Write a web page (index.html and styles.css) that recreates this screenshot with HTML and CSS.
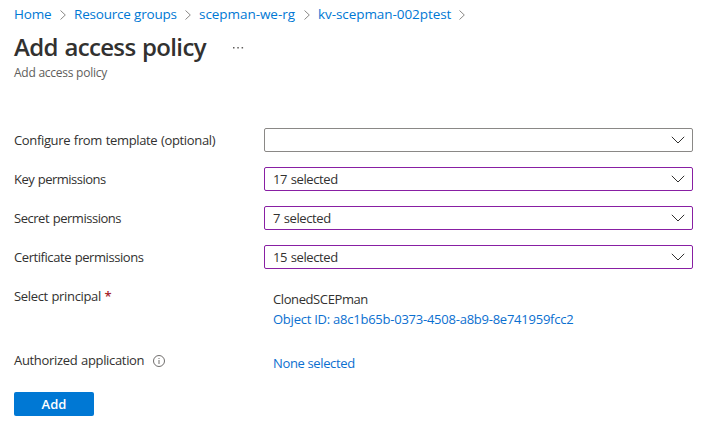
FILE: index.html
```html
<!DOCTYPE html>
<html lang="en">
<head>
<meta charset="utf-8">
<title>Add access policy</title>
<link rel="stylesheet" href="styles.css">
</head>
<body>
<nav class="crumbs">
<a class="c1">Home</a><svg class="sep" viewBox="0 0 6 10"><path d="M.5 .5L5.300 5 .5 9.500"/></svg>
<a class="c2">Resource groups</a><svg class="sep" viewBox="0 0 6 10"><path d="M.5 .5L5.300 5 .5 9.500"/></svg>
<a class="c3">scepman-we-rg</a><svg class="sep" viewBox="0 0 6 10"><path d="M.5 .5L5.300 5 .5 9.500"/></svg>
<a class="c4">kv-scepman-002ptest</a><svg class="sep" viewBox="0 0 6 10"><path d="M.5 .5L5.300 5 .5 9.500"/></svg>
</nav>
<header class="head">
<h1>Add access policy</h1>
<svg class="more" viewBox="0 0 12 4"><path d="M1 1h1.500v1.500H1zM5.300 1h1.500v1.500H5.300zM9.600 1h1.500v1.500H9.600z"/></svg>
</header>
<p class="sub">Add access policy</p>
<main class="form">
<div class="row"><label class="l1">Configure from template (optional)</label><div class="select plain"><span></span><svg viewBox="0 0 14 8"><path d="M.8.8L7 7l6.200-6.200"/></svg></div></div>
<div class="row"><label class="l2">Key permissions</label><div class="select"><span>17 selected</span><svg viewBox="0 0 14 8"><path d="M.8.8L7 7l6.200-6.200"/></svg></div></div>
<div class="row"><label class="l3">Secret permissions</label><div class="select"><span>7 selected</span><svg viewBox="0 0 14 8"><path d="M.8.8L7 7l6.200-6.200"/></svg></div></div>
<div class="row"><label class="l4">Certificate permissions</label><div class="select"><span>15 selected</span><svg viewBox="0 0 14 8"><path d="M.8.8L7 7l6.200-6.200"/></svg></div></div>
<div class="row principal"><label class="l5">Select principal <span class="req">*</span></label><div class="value"><span class="name">ClonedSCEPman</span><a class="object">Object ID: a8c1b65b-0373-4508-a8b9-8e741959fcc2</a></div></div>
<div class="row app"><label class="l6">Authorized application<svg class="info" viewBox="0 0 12 12"><circle cx="6" cy="6" r="5.500"/><path d="M6 5v4M6 3v1"/></svg></label><div class="value"><a class="none">None selected</a></div></div>
</main>
<button class="add">Add</button>
</body>
</html>
```

FILE: styles.css
```css
* { box-sizing: border-box; }
body { margin: 0; padding: 4px 0 0 14px; background: #fff; color: #323130; font: 13px/18px "Open Sans", "Noto Sans", sans-serif; letter-spacing: -.3px; }
a { color: #0b6fd0; white-space: nowrap; }
svg { flex: none; fill: none; stroke: #323130; }
.crumbs { display: flex; align-items: center; height: 20px; font-size: 13.5px; }
.crumbs a { color: #0078d4; }
.c1 { width: 38px; letter-spacing: -.15px; }
.c2 { width: 103px; letter-spacing: -.2px; }
.c3 { width: 97px; letter-spacing: -.05px; }
.c4 { width: 133px; letter-spacing: -.07px; }
.sep { width: 6px; height: 10px; margin: 1px 8px 0; stroke: #8a8886; }
.head { display: flex; align-items: center; height: 42px; gap: 26px; }
h1 { margin: 3px 0 0; font-size: 24px; line-height: 36px; font-weight: 600; letter-spacing: -.65px; word-spacing: 1px; width: 192px; white-space: nowrap; }
.more { width: 12px; height: 4px; margin-top: 6px; fill: #605e5c; stroke: none; }
.sub { margin: 0; height: 16px; font-size: 12px; line-height: 13px; letter-spacing: -.25px; color: #605e5c; }
.form { padding-top: 46px; }
.row { display: flex; height: 39px; }
label { width: 250px; line-height: 25px; white-space: nowrap; }
.l1 { letter-spacing: -.35px; word-spacing: .7px; }
.l2 { letter-spacing: -.52px; word-spacing: .7px; }
.l3 { letter-spacing: -.47px; word-spacing: .7px; }
.l4 { letter-spacing: -.43px; word-spacing: .7px; }
.l5 { letter-spacing: -.33px; word-spacing: .5px; }
.l6 { letter-spacing: -.33px; word-spacing: .7px; }
.select { width: 429px; height: 24px; border: 1px solid #881fa3; border-radius: 2px; display: flex; align-items: center; justify-content: space-between; padding: 0 7px 0 8px; letter-spacing: -.4px; word-spacing: .7px; }
.plain { border-color: #8a8886; }
.select svg { width: 14px; height: 8px; }
.value { display: flex; flex-direction: column; padding: 5px 0 0 9px; line-height: 20px; }
.name { letter-spacing: -.4px; }
.object { letter-spacing: -.24px; }
.none { letter-spacing: -.36px; }
.principal { height: 64px; }
.req { color: #a4262c; font-weight: 600; }
.info { width: 12px; height: 12px; margin-left: 9px; vertical-align: -2px; stroke: #605e5c; stroke-width: .9; }
.app { height: 44px; }
.add { display: block; width: 80px; height: 24px; border: 0; border-radius: 2px; background: #0078d4; color: #fff; font: 600 13px/23px "Open Sans", sans-serif; padding: 0; }
```
